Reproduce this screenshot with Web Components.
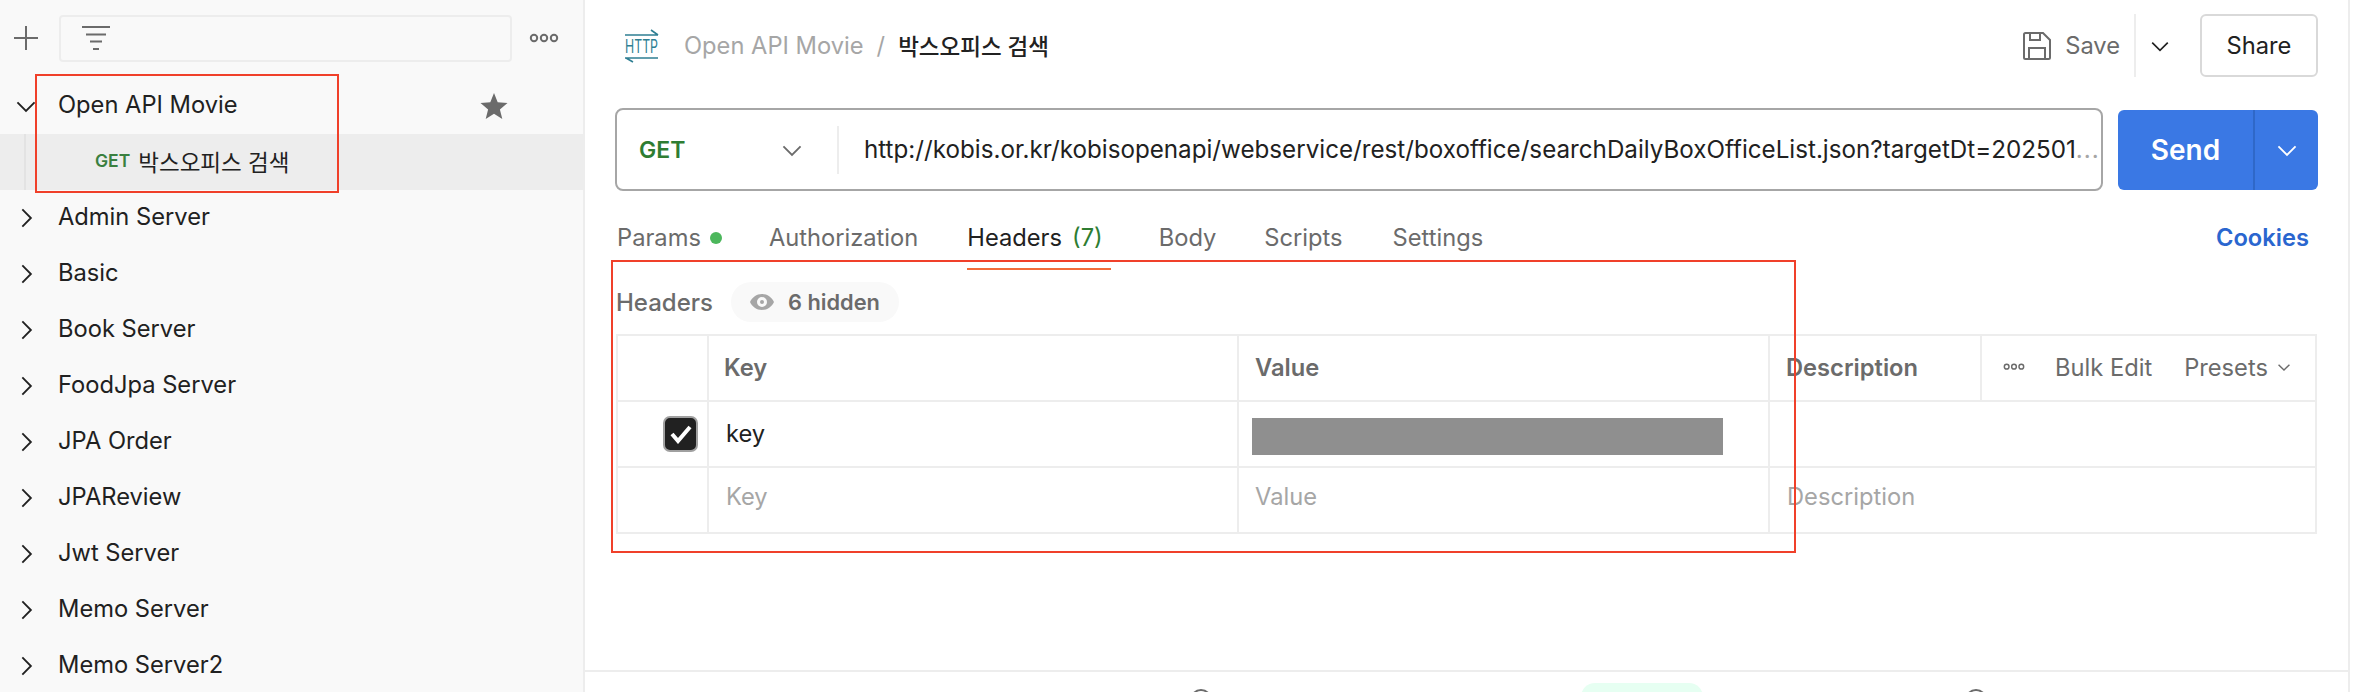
<!DOCTYPE html>
<html lang="ko">
<head>
<meta charset="utf-8">
<title>Open API Movie</title>
<style>
  html, body { margin: 0; height: 692px; overflow: hidden; background: #fff; }
  body {
    position: relative;
    display: flex;
    font-family: Inter, "Noto Sans CJK KR", sans-serif;
    font-size: 23.7px;
    color: #212121;
  }
</style>
</head>
<body>
  <pm-sidebar>
    <pm-collection open starred>Open API Movie</pm-collection>
    <pm-request method="GET">박스오피스 검색</pm-request>
    <pm-collection>Admin Server</pm-collection>
    <pm-collection>Basic</pm-collection>
    <pm-collection>Book Server</pm-collection>
    <pm-collection>FoodJpa Server</pm-collection>
    <pm-collection>JPA Order</pm-collection>
    <pm-collection>JPAReview</pm-collection>
    <pm-collection>Jwt Server</pm-collection>
    <pm-collection>Memo Server</pm-collection>
    <pm-collection>Memo Server2</pm-collection>
  </pm-sidebar>
  <pm-main>
    <pm-titlebar collection="Open API Movie" request="박스오피스 검색"></pm-titlebar>
    <pm-urlbar method="GET" url="http://kobis.or.kr/kobisopenapi/webservice/rest/boxoffice/searchDailyBoxOfficeList.json?targetDt=202501"></pm-urlbar>
    <pm-tabs></pm-tabs>
    <pm-headers></pm-headers>
    <pm-statusbar slot="footer"></pm-statusbar>
  </pm-main>
  <pm-mark style="left:35px;top:74px;width:304px;height:119px"></pm-mark>
  <pm-mark style="left:611px;top:260px;width:1185px;height:293px"></pm-mark>

<script>
const chevron = (dir, size = 22) => {
  const d = dir === 'down' ? 'M2 6l7 7 7-7' : 'M6 2l7 7-7 7';
  return `<svg width="${size}" height="${size}" viewBox="0 0 18 18" fill="none" stroke="currentColor" stroke-width="1.500"><path d="${d}"/></svg>`;
};
const dots = (w = 30) => `<svg width="${w}" height="${w / 3}" viewBox="0 0 30 10" fill="none" stroke="currentColor" stroke-width="2"><circle cx="5" cy="5" r="3.2"/><circle cx="15" cy="5" r="3.2"/><circle cx="25" cy="5" r="3.2"/></svg>`;

class PmElement extends HTMLElement {
  render(html) {
    if (!this.shadowRoot) this.attachShadow({ mode: 'open' });
    this.shadowRoot.innerHTML = html;
  }
}

class PmSidebar extends PmElement {
  connectedCallback() {
    this.render(`
      <style>
        :host { display: block; width: 583px; height: 692px; flex: none; background: #f9f9f9; border-right: 2px solid #ededed; overflow: hidden; }
        .top { display: flex; align-items: center; height: 78px; box-sizing: border-box; padding: 0 24px 2px 14px; color: #6b6b6b; }
        .plus { flex: none; display: flex; width: 24px; margin-right: 21px; }
        .filter { flex: 1; height: 47px; box-sizing: border-box; border: 2px solid #ededed; border-radius: 4px; padding-left: 21px; display: flex; align-items: center; }
        .filter svg { display: block; }
        .more { flex: none; margin-left: 17px; display: flex; }
      </style>
      <div class="top">
        <span class="plus"><svg width="24" height="24" viewBox="0 0 24 24" stroke="currentColor" stroke-width="2"><path d="M12 0v24M0 12h24"/></svg></span>
        <span class="filter"><svg width="28" height="24" viewBox="0 0 28 24" stroke="currentColor" stroke-width="2"><path d="M0 1h28M4 8.500h20M8 15.500h12M11 23h6"/></svg></span>
        <span class="more">${dots()}</span>
      </div>
      <slot></slot>`);
  }
}

class PmCollection extends PmElement {
  connectedCallback() {
    const star = this.hasAttribute('starred')
      ? `<svg class="star" width="28" height="28" viewBox="0 0 28 28" fill="#6b6b6b"><path d="M14 1l3.700 9.300 9.800.7-7.600 6.400 2.400 9.600L14 21.800l-8.300 5.200 2.400-9.600L.5 11l9.800-.7z"/></svg>`
      : '';
    this.render(`
      <style>
        :host { display: flex; align-items: center; height: 56px; color: #212121; }
        .arrow { flex: none; width: 58px; padding-left: 15px; box-sizing: border-box; display: flex; }
        .label { margin-bottom: 3px; }
        .star { margin-left: auto; margin-right: 75px; }
      </style>
      <span class="arrow">${chevron(this.hasAttribute('open') ? 'down' : 'right')}</span>
      <span class="label"><slot></slot></span>
      ${star}`);
  }
}

class PmRequest extends PmElement {
  connectedCallback() {
    this.render(`
      <style>
        :host { display: flex; align-items: center; height: 56px; background: #ededed; padding: 0 0 3px 95px; box-sizing: border-box; position: relative; font-size: 22.5px; }
        :host::before { content: ""; position: absolute; left: 24px; top: 0; bottom: 0; width: 2px; background: #e3e3e3; }
        .method { font-size: 17.500px; font-weight: 600; color: #3a8040; margin-right: 8px; }
      </style>
      <span class="method">${this.getAttribute('method')}</span>
      <slot></slot>`);
  }
}

class PmMain extends PmElement {
  connectedCallback() {
    this.render(`
      <style>
        :host { display: flex; flex-direction: column; width: 1763px; height: 692px; flex: none; box-sizing: content-box; border-right: 2px solid #ededed; }
        .body { flex: 1; padding: 14px 30px 0; min-height: 0; }
      </style>
      <div class="body"><slot></slot></div>
      <slot name="footer"></slot>`);
  }
}

class PmTitlebar extends PmElement {
  connectedCallback() {
    this.render(`
      <style>
        :host { display: flex; align-items: center; height: 63px; }
        .http { flex: none; margin-left: 10px; margin-right: 25px; display: block; overflow: visible; }
        .crumb { color: #a6a6a6; }
        .sep { color: #a6a6a6; margin: 0 13px; }
        .name { font-weight: 500; color: #212121; font-size: 22.5px; margin-bottom: 2px; }
        .right { margin-left: auto; display: flex; align-items: center; height: 100%; color: #6b6b6b; }
        .save { margin-right: 14px; display: block; }
        .divider { width: 2px; height: 100%; background: #ededed; margin-left: 14px; }
        .caret { display: flex; margin: 0 30px 0 14px; color: #212121; }
        .share { height: 100%; box-sizing: border-box; width: 118px; display: flex; align-items: center; justify-content: center; border: 2px solid #d9d9d9; border-radius: 6px; color: #212121; }
      </style>
      <svg class="http" width="34" height="32" viewBox="0 0 34 32" fill="none" stroke="#2f7f93" stroke-width="1.6">
        <path d="M0 5h33M26 0l7 5M0 28h33M8 32l-7-4"/>
        <text x="0" y="23" font-size="19" font-family="Inter, sans-serif" textLength="33" lengthAdjust="spacingAndGlyphs" fill="#2f7f93" stroke="none">HTTP</text>
      </svg>
      <span class="crumb">${this.getAttribute('collection')}</span>
      <span class="sep">/</span>
      <span class="name">${this.getAttribute('request')}</span>
      <div class="right">
        <svg class="save" width="28" height="28" viewBox="0 0 28 28" fill="none" stroke="currentColor" stroke-width="2"><path d="M1 2.500A1.500 1.500 0 0 1 2.500 1H20l7 7v17.500a1.500 1.500 0 0 1-1.500 1.500H2.500A1.500 1.500 0 0 1 1 25.500z"/><path d="M7 1v7h10V1M6 27V16h16v11"/></svg>
        <span>Save</span>
        <span class="divider"></span>
        <span class="caret">${chevron('down', 20)}</span>
        <span class="share">Share</span>
      </div>`);
  }
}

class PmUrlbar extends PmElement {
  connectedCallback() {
    this.render(`
      <style>
        :host { display: flex; align-items: center; margin-top: 31px; height: 83px; }
        .box { flex: 1; min-width: 0; height: 100%; box-sizing: border-box; border: 2px solid #a6a6a6; border-radius: 8px; display: flex; align-items: center; }
        .method { flex: none; width: 222px; box-sizing: border-box; padding-left: 22px; display: flex; align-items: center; justify-content: space-between; padding-right: 34px; height: 48px; border-right: 2px solid #ededed; color: #2e7d32; font-weight: 600; font-size: 23px; }
        .method svg { color: #6b6b6b; }
        .url { flex: 1; min-width: 0; padding-left: 25px; white-space: nowrap; font-size: 24.200px; }
        .url span { color: #a6a6a6; letter-spacing: 1px; }
        .send { flex: none; margin-left: 15px; width: 200px; height: 80px; background: #3a78e4; color: #fff; border-radius: 6px; display: flex; }
        .label { flex: none; width: 135px; display: flex; align-items: center; justify-content: center; font-weight: 600; font-size: 28px; border-right: 2px solid #2f68c8; }
        .more { flex: 1; display: flex; align-items: center; justify-content: center; }
      </style>
      <div class="box">
        <div class="method"><span>${this.getAttribute('method')}</span>${chevron('down')}</div>
        <div class="url">${this.getAttribute('url')}<span>...</span></div>
      </div>
      <div class="send"><span class="label">Send</span><span class="more">${chevron('down')}</span></div>`);
  }
}

class PmTabs extends PmElement {
  connectedCallback() {
    this.render(`
      <style>
        :host { display: flex; gap: 48px; height: 91px; padding: 0 9px 0 2px; align-items: flex-start; }
        .tab { position: relative; height: 79px; padding-top: 32px; box-sizing: border-box; line-height: 30px; color: #6b6b6b; white-space: nowrap; display: flex; align-items: flex-start; }
        .tab.auth { margin-left: -1px; }
        .tab.on { color: #212121; margin-left: 1px; padding-right: 8px; }
        .tab.on::after { content: ""; position: absolute; left: 0; right: 0; bottom: 0; height: 2px; background: #f26b3a; }
        .tab.last { margin-left: 2px; }
        .dot { width: 12px; height: 12px; background: #4cb75c; border-radius: 50%; margin: 9px 0 0 9px; }
        .n { color: #2e7d32; margin-left: 10px; }
        .cookies { margin-left: auto; padding-top: 32px; line-height: 30px; color: #2a66cf; font-weight: 600; }
      </style>
      <span class="tab">Params<span class="dot"></span></span>
      <span class="tab auth">Authorization</span>
      <span class="tab on">Headers<span class="n">(7)</span></span>
      <span class="tab">Body</span>
      <span class="tab">Scripts</span>
      <span class="tab last">Settings</span>
      <span class="cookies">Cookies</span>`);
  }
}

class PmHeaders extends PmElement {
  connectedCallback() {
    this.render(`
      <style>
        :host { display: block; }
        .head { display: flex; align-items: center; height: 40px; margin-bottom: 12px; padding-left: 1px; color: #6b6b6b; font-weight: 500; font-size: 24px; }
        .pill { margin-left: 18px; height: 40px; box-sizing: border-box; padding: 0 19px; border-radius: 20px; background: #f9f9f9; display: flex; align-items: center; gap: 14px; font-weight: 600; font-size: 21.800px; }
        .grid { margin-left: 1px; width: 1701px; box-sizing: border-box; display: grid; grid-template-columns: 91px 530px 531px 212px 1fr; grid-auto-rows: 66px; border: solid #ededed; border-width: 2px 2px 0 2px; }
        .c { border: solid #ededed; border-width: 0 2px 2px 0; padding: 0 0 2px 17px; display: flex; align-items: center; min-width: 0; white-space: nowrap; }
        .c.end { border-right: 0; }
        .wide { grid-column: span 2; }
        .th { color: #6b6b6b; font-weight: 600; padding-left: 16px; }
        .th.first { padding-left: 15px; }
        .ph { color: #a6a6a6; padding-bottom: 7px; }
        .chk { padding: 0 0 0 45px; }
        .box { width: 35px; height: 36px; box-sizing: border-box; background: #212121; border: 2px solid #a0a0a0; border-radius: 7px; display: flex; align-items: center; justify-content: center; }
        .tools { padding-left: 21px; color: #6b6b6b; gap: 30px; }
        .tools .dots { display: flex; }
        .presets { display: flex; align-items: center; gap: 9px; margin-left: 2px; }
        .val { padding: 5px 0 0 13px; }
        .ph.val { padding: 0 0 7px 16px; }
        .mask { width: 471px; height: 37px; background: #8f8f8f; }
      </style>
      <div class="head">Headers
        <span class="pill"><svg width="24" height="16" viewBox="0 0 24 16" fill="#a6a6a6"><path fill-rule="evenodd" d="M12 0c5.500 0 9.800 3.500 12 8-2.200 4.500-6.500 8-12 8S2.200 12.500 0 8c2.200-4.500 6.500-8 12-8zm0 3a5 5 0 1 0 0 10 5 5 0 0 0 0-10zm0 3a2 2 0 1 1 0 4 2 2 0 0 1 0-4z"/></svg>6 hidden</span>
      </div>
      <div class="grid">
        <div class="c"></div>
        <div class="c th first">Key</div>
        <div class="c th">Value</div>
        <div class="c th">Description</div>
        <div class="c end tools"><span class="dots">${dots(22)}</span><span>Bulk Edit</span><span class="presets">Presets <svg width="14" height="14" viewBox="0 0 18 18" fill="none" stroke="currentColor" stroke-width="1.800"><path d="M2 6l7 7 7-7"/></svg></span></div>

        <div class="c chk"><span class="box"><svg width="24" height="20" viewBox="0 0 24 20" fill="none" stroke="#fff" stroke-width="4"><path d="M3 10l6 7L21 3"/></svg></span></div>
        <div class="c">key</div>
        <div class="c val"><span class="mask"></span></div>
        <div class="c end wide"></div>

        <div class="c"></div>
        <div class="c ph">Key</div>
        <div class="c ph val">Value</div>
        <div class="c end wide ph">Description</div>
      </div>`);
  }
}

class PmStatusbar extends PmElement {
  connectedCallback() {
    this.render(`
      <style>
        :host { display: flex; height: 22px; flex: none; border-top: 2px solid #ededed; box-sizing: border-box; overflow: hidden; padding-left: 605px; position: relative; }
        .ico { width: 22px; height: 22px; border: 2px solid #6b6b6b; border-radius: 50%; box-sizing: border-box; margin-top: 17px; }
        .pill { width: 122px; height: 40px; background: #e6fff2; border-radius: 14px; margin: 11px 0 0 369px; }
        .ico.last { margin-left: 262px; }
      </style>
      <span class="ico"></span><span class="pill"></span><span class="ico last"></span>`);
  }
}

class PmMark extends PmElement {
  connectedCallback() {
    this.render(`
      <style>
        :host { position: absolute; pointer-events: none; display: block; }
        .frame { position: absolute; inset: 0; box-sizing: border-box; border: 2.500px solid #f0402a; filter: url(#rough); }
        svg { position: absolute; width: 0; height: 0; }
      </style>
      <svg aria-hidden="true"><filter id="rough" x="-2%" y="-2%" width="104%" height="104%"><feTurbulence type="fractalNoise" baseFrequency="0.4" numOctaves="1" seed="4"/><feDisplacementMap in="SourceGraphic" scale="1.500"/></filter></svg>
      <div class="frame"></div>`);
  }
}

customElements.define('pm-sidebar', PmSidebar);
customElements.define('pm-collection', PmCollection);
customElements.define('pm-request', PmRequest);
customElements.define('pm-main', PmMain);
customElements.define('pm-titlebar', PmTitlebar);
customElements.define('pm-urlbar', PmUrlbar);
customElements.define('pm-tabs', PmTabs);
customElements.define('pm-headers', PmHeaders);
customElements.define('pm-statusbar', PmStatusbar);
customElements.define('pm-mark', PmMark);
</script>
</body>
</html>
